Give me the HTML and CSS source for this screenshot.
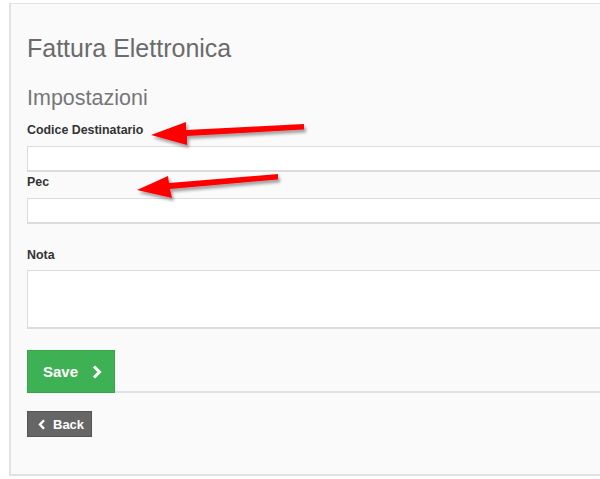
FILE: index.html
```html
<!DOCTYPE html>
<html lang="it">

<head>
    <meta charset="UTF-8">
    <title>Fattura Elettronica</title>
    <link rel="stylesheet" href="styles.css">
</head>

<body>
    <div class="panel">
        <h1 class="page-title">Fattura Elettronica</h1>
        <h2 class="section-title">Impostazioni</h2>

        <form class="settings-form">
            <label class="field-label first-label" for="codice">Codice Destinatario</label>
            <input class="field-input" id="codice" type="text">

            <label class="field-label" for="pec">Pec</label>
            <input class="field-input" id="pec" type="text">

            <label class="field-label nota-label" for="nota">Nota</label>
            <textarea class="field-input field-area" id="nota"></textarea>

            <div class="form-actions">
                <button type="button" class="btn btn-save">Save
                    <svg class="chev" width="10" height="14" viewBox="0 0 10 14"><path d="M2 1.5 L7.5 7 L2 12.5" fill="none" stroke="white" stroke-width="3"/></svg>
                </button>
            </div>
        </form>

        <button type="button" class="btn btn-back">
            <svg class="chev" width="8" height="11" viewBox="0 0 8 11"><path d="M6 1.2 L2 5.5 L6 9.8" fill="none" stroke="white" stroke-width="2.4"/></svg>
            Back
        </button>

        <!-- annotation arrows drawn over the form -->
        <svg class="arrows" width="600" height="479" viewBox="0 0 600 479">
            <defs>
                <filter id="shadow" x="-10%" y="-30%" width="120%" height="160%">
                    <feDropShadow dx="2" dy="3" stdDeviation="1.5" flood-color="#000" flood-opacity="0.35"/>
                </filter>
            </defs>
            <g fill="#ff0000" filter="url(#shadow)">
                <polygon points="151,135 186,122 186,130 304,124 304,129.5 187,136 187,145"/>
                <polygon points="137,190 168,176 169,183 278,174 278,179.5 170,189 172,198"/>
            </g>
        </svg>
    </div>
</body>

</html>
```

FILE: styles.css
```css
* {
    box-sizing: border-box;
}

body {
    margin: 0;
    background: white;
    font-family: 'Liberation Sans', Arial, sans-serif;
    overflow: hidden;
}

/* Main panel, runs off the right side of the window */
.panel {
    position: relative;
    width: 640px;
    height: 473px;
    margin: 3px 0 0 9px;
    padding: 24px 0 0 16px;
    background: #fafafa;
    border: 2px solid #e2e2e2;
    border-width: 1px 1px 2px 2px;
}

.page-title {
    margin: 0;
    font-size: 25px;
    font-weight: normal;
    line-height: 40px;
    color: #6b6b6b;
}

.section-title {
    margin: 15px 0 0;
    font-size: 21.5px;
    font-weight: normal;
    line-height: 30px;
    color: #777;
}

.settings-form {
    display: flex;
    flex-direction: column;
}

.field-label {
    font-size: 12.4px;
    font-weight: bold;
    line-height: 16px;
    color: #333;
    margin-top: 2px;
    margin-bottom: 8px;
}

.first-label {
    margin-top: 9px;
}

.field-input {
    display: block;
    width: 100%;
    height: 26px;
    margin: 0;
    background: white;
    border: 1px solid #dcdcdc;
    border-width: 1px 0 2px 1px;
    font-family: inherit;
}

.nota-label {
    margin-top: 23px;
    margin-bottom: 7px;
}

.field-area {
    height: 59px;
    resize: none;
    margin-bottom: 21px;
}

.form-actions {
    display: flex;
    border-bottom: 2px solid #e2e2e2;
    height: 43px;
}

.btn {
    display: flex;
    align-items: center;
    font-family: inherit;
    font-weight: bold;
    color: white;
    cursor: pointer;
}

.btn-save {
    width: 88px;
    height: 43px;
    padding: 0 0 0 15px;
    gap: 14px;
    font-size: 15px;
    background: #3fb155;
    border: 1px solid #36a64b;
}

.btn-back {
    margin-top: 18px;
    width: 65px;
    height: 26px;
    padding: 0 0 0 10px;
    gap: 7px;
    font-size: 13px;
    background: #666;
    border: 1px solid #555;
}

.arrows {
    position: absolute;
    left: -11px;
    top: -4px;
    pointer-events: none;
}
```
